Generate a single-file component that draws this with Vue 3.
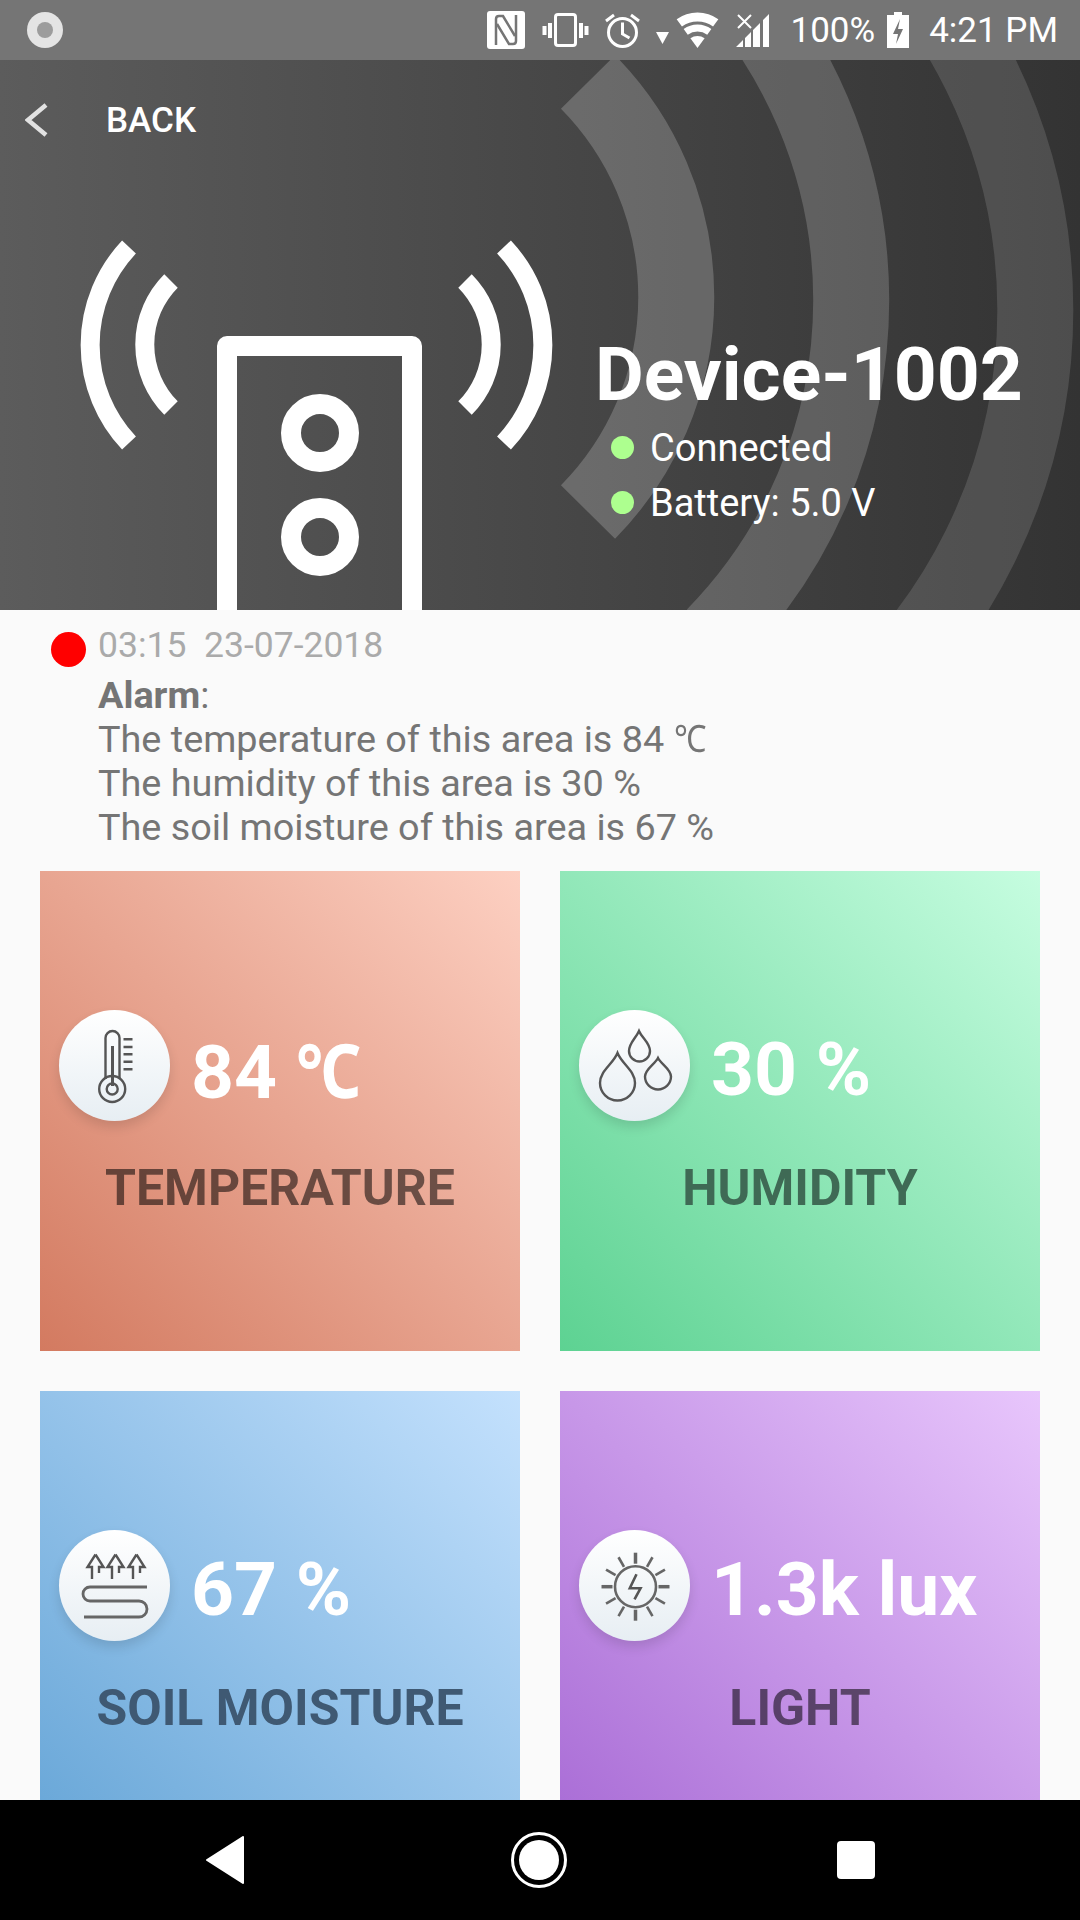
<script setup>
const alarmLines = [
  { text: "The temperature of this area is 84 ", deg: true },
  { text: "The humidity of this area is 30 %" },
  { text: "The soil moisture of this area is 67 %" },
];

const cards = [
  { id: "temp", value: "84 ", deg: true, label: "TEMPERATURE" },
  { id: "hum", value: "30 %", label: "HUMIDITY" },
  { id: "soil", value: "67 %", label: "SOIL MOISTURE" },
  { id: "light", value: "1.3k lux", label: "LIGHT" },
];

const rays = [0, 30, 60, 90, 120, 150, 180, 210, 240, 270, 300, 330];
</script>

<template>
  <div class="phone">
    <div class="status">
      <div class="rec"><span></span></div>
      <div class="status-right">
        <svg class="st-n" viewBox="0 0 38 38" fill="none">
          <rect width="38" height="38" rx="3" fill="#fff" />
          <path d="M9 34V8q0-3 3-3h4l12 20" stroke="#757575" stroke-width="2.500" />
          <path d="M29 4v26q0 3-3 3h-4L10 13" stroke="#757575" stroke-width="2.500" />
        </svg>
        <svg class="st-vib" viewBox="0 0 47 34" fill="none" stroke="#fff">
          <rect x="13.500" y="1.500" width="20" height="31" rx="2.500" stroke-width="3" />
          <path d="M8 10v15M2.500 13v9M39 10v15M44.500 13v9" stroke-width="4" />
        </svg>
        <svg class="st-alarm" viewBox="0 0 35 36" fill="none" stroke="#fff" stroke-width="3">
          <circle cx="17.500" cy="20.500" r="14" />
          <path d="M17.500 10.500V22l7 4" />
          <path d="M1 9l8-6M34 9l-8-6" />
        </svg>
        <svg class="st-tri" viewBox="0 0 13 12"><path d="M0 0h13L6.500 12z" fill="#fff" /></svg>
        <svg class="st-wifi" viewBox="0 0 43 36" fill="none" stroke="#fff">
          <path d="M3.300 10.900A31 31 0 0 1 39.700 10.900" stroke-width="9" />
          <path d="M9.700 19.800A20 20 0 0 1 33.300 19.800" stroke-width="7" />
          <path d="M21.500 36L14.400 26.300A12 12 0 0 1 28.600 26.300z" fill="#fff" stroke="none" />
        </svg>
        <svg class="st-sig" viewBox="0 0 33 34">
          <path d="M0 34l7-7v7zM9 25l6-6v15H9zM17 17l7-7v24h-7zM27 7l6-6v33h-6z" fill="#fff" />
          <path d="M2 2l13 13M15 2L2 15" stroke="#fff" stroke-width="2" />
        </svg>
        <span class="st-text pct">100%</span>
        <svg class="st-bat" viewBox="0 0 22 36">
          <path d="M7 0h8v3h7v33H0V3h7z" fill="#fff" />
          <path d="M13 7l-7 15h5l-2 10 7-15h-5z" fill="#757575" />
        </svg>
        <span class="st-text clock">4:21 PM</span>
      </div>
    </div>

    <header class="hero">
      <svg class="waves" viewBox="0 0 1080 550" fill="none">
        <path d="M588 22A306 306 0 0 1 588 452" stroke="#fff" stroke-opacity=".2" stroke-width="76" />
        <path d="M714 -96A480 480 0 0 1 714 576" stroke="#fff" stroke-opacity=".18" stroke-width="76" />
        <path d="M844 -160A535 535 0 0 1 844 660" stroke="#fff" stroke-opacity=".13" stroke-width="76" />
      </svg>

      <div class="back">
        <svg class="chev" viewBox="0 0 26 34" fill="none">
          <path d="M21 2L3 17l18 15" stroke="#e2e2e2" stroke-width="4.500" />
        </svg>
        <span>BACK</span>
      </div>

      <div class="hero-main">
        <svg class="device" viewBox="0 0 480 370" fill="none" stroke="#fff">
          <path d="M49 7A143 143 0 0 0 49 203M91 41A90 90 0 0 0 91 168M385 41A90 90 0 0 1 385 168M424 7A143 143 0 0 1 424 203" stroke-width="19" />
          <path d="M147 370V106h185v264" stroke-width="20" stroke-linejoin="round" />
          <circle cx="240" cy="193" r="29" stroke-width="20" />
          <circle cx="240" cy="297" r="29" stroke-width="20" />
        </svg>
        <div class="info">
          <h1>Device-1002</h1>
          <div class="info-row"><i></i>Connected</div>
          <div class="info-row"><i></i>Battery: 5.0 V</div>
        </div>
      </div>
    </header>

    <section class="alarm">
      <span class="alarm-dot"></span>
      <div>
        <div class="alarm-time">03:15&nbsp; 23-07-2018</div>
        <div class="alarm-text"><b>Alarm</b>:</div>
        <div v-for="line in alarmLines" :key="line.text" class="alarm-text">{{ line.text }}<span v-if="line.deg" class="deg">℃</span></div>
      </div>
    </section>

    <main class="grid">
      <div v-for="card in cards" :key="card.id" class="card" :class="card.id">
        <div class="card-top">
          <div class="bubble">
            <svg v-if="card.id === 'temp'" viewBox="0 0 80 80" fill="none" stroke="#555" stroke-width="2.400">
              <path d="M30.500 53V12a7 7 0 0 1 14 0V53" />
              <path d="M37.500 20V60" stroke-width="3" />
              <circle cx="37.200" cy="63" r="13" />
              <circle cx="37.200" cy="63" r="5.500" />
              <path d="M48.500 13.300h9M48.500 21h9M48.500 28.300h9M48.500 35.700h9M48.500 43.300h9" stroke-width="2.600" />
            </svg>
            <svg v-else-if="card.id === 'hum'" viewBox="0 0 80 80" fill="none" stroke="#555" stroke-width="2.400">
              <path d="M44 5C47 12 55 17 55 25A10.500 10.500 0 0 1 34 25C34 17 41 12 44 5z" />
              <path d="M22.500 27C27 38 40 45 40 57A17.500 17.500 0 0 1 5 57C5 45 18 38 22.500 27z" />
              <path d="M63 32C66 38 76 43 76 50.500A13 13 0 0 1 50 50.500C50 43 60 38 63 32z" />
            </svg>
            <svg v-else-if="card.id === 'soil'" viewBox="0 0 80 80" fill="none" stroke="#555" stroke-width="2.400">
              <path d="M72 41H15a7 7 0 0 0 0 14H64a8 8 0 0 1 0 16H9" stroke="#666" stroke-width="2.800" />
              <path d="M20.500 8.500L12.500 21H17V33M20.500 8.500L28.500 21H24V27" />
              <path d="M40.500 8.500L32.500 21H37V33M40.500 8.500L48.500 21H44V27" />
              <path d="M61.500 8.500L53.500 21H58V33M61.500 8.500L69.500 21H65V27" />
            </svg>
            <svg v-else viewBox="0 0 80 80" fill="none" stroke="#666" stroke-width="2.600">
              <circle cx="40.500" cy="40.700" r="20.500" />
              <path d="M41.500 28.300L34.800 42.300H45.500L39.500 53.300" stroke="#555" />
              <line v-for="r in rays" :key="r" x1="40.500" y1="6.700" x2="40.500" y2="17.700" :stroke-width="r % 90 === 0 ? 3.500 : 2.600" :transform="`rotate(${r} 40.500 40.700)`" />
            </svg>
          </div>
          <span class="value">{{ card.value }}<span v-if="card.deg" class="deg">℃</span></span>
        </div>
        <div class="label">{{ card.label }}</div>
      </div>
    </main>

    <nav class="navbar">
      <svg class="nav-back" viewBox="0 0 40 48"><path d="M38 1v46L2 24z" fill="#fff" stroke="#fff" stroke-width="2" stroke-linejoin="round" /></svg>
      <div class="nav-home"><span></span></div>
      <span class="nav-square"></span>
    </nav>
  </div>
</template>

<style>
html, body { margin: 0; background: #fafafa; }
</style>

<style scoped>
.phone {
  width: 1080px;
  height: 1920px;
  display: flex;
  flex-direction: column;
  overflow: hidden;
  background: #fafafa;
  font-family: Roboto, "Liberation Sans", "Noto Sans", sans-serif;
}
.status {
  height: 60px;
  flex: none;
  background: #757575;
  color: #fff;
  display: flex;
  align-items: center;
  justify-content: space-between;
  padding: 0 22px 0 27px;
}
.rec {
  width: 36px;
  height: 36px;
  border-radius: 50%;
  background: #e4e4e4;
  display: flex;
  align-items: center;
  justify-content: center;
}
.rec span {
  width: 16px;
  height: 16px;
  border-radius: 50%;
  background: #9c9c9c;
}
.status-right { display: flex; align-items: center; }
.status-right svg { display: block; flex: none; }
.st-n { width: 38px; height: 38px; }
.st-vib { width: 47px; height: 34px; margin-left: 17px; }
.st-alarm { width: 35px; height: 36px; margin-left: 16px; }
.st-tri { width: 13px; height: 12px; margin: 16px 0 0 16px; }
.st-wifi { width: 43px; height: 36px; margin-left: 7px; }
.st-sig { width: 33px; height: 34px; margin-left: 17px; }
.st-text { font-size: 35px; font-weight: 400; }
.pct { margin-left: 22px; }
.st-bat { width: 22px; height: 36px; margin-left: 12px; }
.clock { margin-left: 20px; }

.hero {
  height: 550px;
  flex: none;
  position: relative;
  overflow: hidden;
  background: linear-gradient(90deg, #5c5c5c 0%, #333 100%);
  color: #fff;
}
.waves { position: absolute; left: 0; top: 0; width: 1080px; height: 550px; }
.back {
  position: relative;
  display: flex;
  align-items: center;
  height: 34px;
  padding: 43px 0 0 25px;
  font-size: 35px;
  font-weight: 500;
}
.chev { width: 26px; height: 34px; margin-right: 55px; filter: blur(0.6px); }
.hero-main {
  position: relative;
  display: flex;
  align-items: flex-start;
  margin-top: 103px;
  padding-left: 80px;
}
.device { width: 480px; height: 370px; flex: none; margin-right: 35px; display: block; }
.info { padding-top: 88px; }
.info h1 {
  margin: 0;
  font-size: 75px;
  font-weight: 700;
  line-height: 92px;
  white-space: nowrap;
}
.info-row {
  display: flex;
  align-items: center;
  height: 55px;
  font-size: 38px;
  padding-left: 16px;
}
.info-row i {
  width: 23px;
  height: 23px;
  border-radius: 50%;
  background: #adff8f;
  margin-right: 16px;
}

.alarm {
  display: flex;
  height: 261px;
  flex: none;
  padding: 17px 0 0 51px;
  box-sizing: border-box;
  color: #757575;
}
.alarm-dot {
  width: 35px;
  height: 35px;
  border-radius: 50%;
  background: #f00;
  margin: 5px 12px 0 0;
}
.alarm-time { font-size: 35.500px; color: #aaa; line-height: 36px; margin-bottom: 10px; }
.alarm-text { font-size: 37.800px; line-height: 44px; white-space: nowrap; }
.deg {
  display: inline-block;
  width: 0.84em;
  transform: scaleX(0.86);
  transform-origin: left center;
}

.grid {
  flex: 1;
  min-height: 0;
  display: grid;
  grid-template-columns: 480px 480px;
  grid-auto-rows: 480px;
  gap: 40px;
  padding: 0 40px;
}
.card { box-sizing: border-box; padding: 139px 0 0 19px; }
.temp { background: linear-gradient(45deg, #d37a60, #fdd0c2); }
.hum { background: linear-gradient(45deg, #5dd292, #c6fde0); }
.soil { background: linear-gradient(45deg, #64a4d6, #c4e1fd); }
.light { background: linear-gradient(45deg, #a668d4, #e8c6fc); }
.card-top { display: flex; align-items: center; }
.bubble {
  width: 111px;
  height: 111px;
  flex: none;
  border-radius: 50%;
  background: linear-gradient(180deg, #fff 0%, #e7eef3 100%);
  box-shadow: 0 6px 12px rgba(0, 0, 0, 0.12);
  display: flex;
  align-items: center;
  justify-content: center;
}
.bubble svg { width: 80px; height: 80px; }
.value {
  margin: 6px 0 0 21px;
  color: #fff;
  font-size: 75px;
  font-weight: 700;
  white-space: pre;
}
.label {
  margin: 38px 0 0 -19px;
  text-align: center;
  font-size: 50px;
  font-weight: 700;
  color: rgba(0, 0, 0, 0.54);
}
.soil .label { color: #3f5973; }
.hum .label { color: #3f6a55; }

.navbar {
  height: 120px;
  flex: none;
  background: #000;
  display: flex;
  align-items: center;
  padding-left: 205px;
}
.nav-back { width: 40px; height: 48px; }
.nav-home {
  width: 56px;
  height: 56px;
  box-sizing: border-box;
  border: 3px solid #fff;
  border-radius: 50%;
  margin-left: 266px;
  display: flex;
  align-items: center;
  justify-content: center;
}
.nav-home span { width: 40px; height: 40px; border-radius: 50%; background: #fff; }
.nav-square {
  width: 38px;
  height: 38px;
  border-radius: 4px;
  background: #fff;
  margin-left: 270px;
}
</style>
